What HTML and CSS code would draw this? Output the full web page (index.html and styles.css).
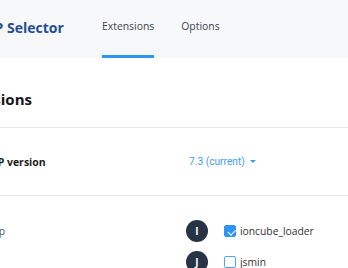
FILE: index.html
```html
<!DOCTYPE html>
<html lang="en">
  <head>
    <meta charset="UTF-8" />
    <meta name="viewport" content="width=device-width, initial-scale=1.0" />
    <title>PHP Selector</title>
    <link rel="stylesheet" href="styles.css">
  </head>

  <body>
    <div class="page">
      <header class="topbar">
        <div class="brand">PHP Selector</div>
        <nav class="tabs">
          <a class="tab active">Extensions</a>
          <a class="tab">Options</a>
        </nav>
      </header>

      <h1 class="heading">Extensions</h1>

      <div class="row version-row">
        <div class="label">PHP version</div>
        <div class="value">
          <span class="version">7.3 (current)</span>
          <span class="caret"></span>
        </div>
      </div>

      <div class="ext-list">
        <div class="ext-row">
          <div class="label plain">Setup</div>
          <div class="ext">
            <span class="letter">I</span>
            <span class="check on"></span>
            <span class="ext-name">ioncube_loader</span>
          </div>
        </div>
        <div class="ext-row">
          <div class="label plain">Json</div>
          <div class="ext">
            <span class="letter">J</span>
            <span class="check"></span>
            <span class="ext-name">jsmin</span>
          </div>
        </div>
      </div>
    </div>
  </body>
</html>
```

FILE: styles.css
```css
* {
  margin: 0;
  padding: 0;
  box-sizing: border-box;
}

body {
  font-family: "Open Sans", sans-serif;
  background: #fff;
  overflow: hidden;
}

/* page is scrolled a bit to the right */
.page {
  margin-left: -60px;
  width: 480px;
}

.topbar {
  display: flex;
  height: 58px;
  background: #f7f8fa;
}

.brand {
  flex: 0 0 162px;
  padding-left: 35px;
  display: flex;
  align-items: center;
  padding-bottom: 3px;
  font-size: 14px;
  font-weight: 700;
  color: #234d91;
}

.tabs {
  display: flex;
  gap: 27px;
}

.tab {
  display: flex;
  align-items: center;
  height: 100%;
  padding-bottom: 4px;
  border-bottom: 3px solid transparent;
  font-size: 10.4px;
  color: #3d4451;
}

.tab.active {
  border-bottom-color: #2a96f0;
}

.heading {
  padding: 31px 0 18px 11px;
  line-height: 20px;
  font-size: 15px;
  font-weight: 700;
  color: #161616;
  border-bottom: 1px solid #e8e8e8;
}

.row {
  display: flex;
  align-items: center;
}

.version-row {
  height: 68px;
  border-bottom: 1px solid #e8e8e8;
}

.label {
  flex: 0 0 246px;
  padding-left: 43px;
  font-size: 10.5px;
  font-weight: 700;
  color: #1c1c1c;
}

.label.plain {
  padding-left: 37px;
  font-weight: 400;
  color: #555;
}

.value {
  display: flex;
  align-items: center;
  padding-left: 3px;
}

.version {
  font-family: Roboto, sans-serif;
  font-size: 10.2px;
  color: #3e9cf2;
}

.caret {
  margin-left: 5px;
  border-left: 3px solid transparent;
  border-right: 3px solid transparent;
  border-top: 3px solid #3e9cf2;
}

.ext-list {
  display: flex;
  flex-direction: column;
  gap: 9px;
  padding-top: 24px;
}

.ext-row {
  display: flex;
  align-items: center;
}

.ext {
  display: flex;
  align-items: center;
}

.letter {
  width: 22px;
  height: 22px;
  border-radius: 50%;
  background: #263446;
  color: #fff;
  font-size: 10px;
  font-weight: 700;
  display: flex;
  align-items: center;
  justify-content: center;
}

.check {
  width: 12px;
  height: 12px;
  margin-left: 16px;
  border: 1.5px solid #4ea4f4;
  border-radius: 2px;
  background: #fff;
  position: relative;
}

.check.on {
  background: #2f95f0;
  border-color: #2f95f0;
}

.check.on::after {
  content: "";
  position: absolute;
  left: 2.5px;
  top: 0.5px;
  width: 6px;
  height: 3.5px;
  border-left: 1.5px solid #fff;
  border-bottom: 1.5px solid #fff;
  transform: translateY(2px) rotate(-45deg);
}

.ext-name {
  margin-left: 4px;
  font-size: 10.3px;
  color: #333;
}
```
